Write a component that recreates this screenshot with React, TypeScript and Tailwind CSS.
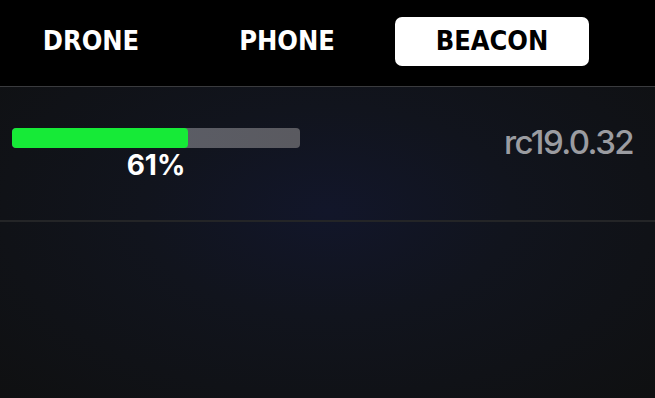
const TABS = [
  { label: 'DRONE', cls: 'w-[182px]' },
  { label: 'PHONE', cls: 'ml-[8px] w-[194px]' },
  { label: 'BEACON', cls: 'ml-[11px] w-[194px]' },
];

export default function App() {
  const active = 'BEACON';
  const pct = 61;

  return (
    <div className="flex h-[398px] w-[655px] flex-col overflow-hidden bg-[#0f1012]">
      <div className="flex h-[86px] items-center bg-black pb-[3px]">
        {TABS.map(t => (
          <div
            key={t.label}
            className={`${t.cls} flex h-[49px] items-center justify-center rounded-[7px] text-[27px] font-bold ${
              active === t.label ? 'bg-white text-black' : 'text-white'
            }`}
            style={{ fontFamily: '"DejaVu Sans Condensed", "DejaVu Sans", sans-serif', fontStretch: 'condensed' }}
          >
            {t.label}
          </div>
        ))}
      </div>
      <div className="h-px bg-[#3a3b3e]" />
      <div className="relative flex-1 bg-[radial-gradient(ellipse_at_50%_40%,#12162a_0%,#11141d_40%,#0f1011_100%)]">
        <div className="flex h-[133px] items-start justify-between px-[12px] pt-[41px]">
          <div className="flex w-[288px] flex-col items-center">
            <div className="h-[20px] w-full overflow-hidden rounded-[4px] bg-gradient-to-r from-[#5c606c] to-[#5a5a60]">
              <div className="h-full rounded-[4px] bg-[#16ea37]" style={{ width: `${pct}%` }} />
            </div>
            <div className="mt-[1px] text-[28px] font-bold leading-[32px] text-white" style={{ fontFamily: 'Inter, sans-serif' }}>
              {pct}%
            </div>
          </div>
          <div className="-mt-[6px] mr-[10px] text-[33px] font-medium leading-[40px] tracking-[-1.6px] text-[#9b9ca1]" style={{ fontFamily: 'Inter, sans-serif' }}>
            rc19.0.32
          </div>
        </div>
        <div className="h-[2px] bg-[#242527]" />
      </div>
    </div>
  );
}
